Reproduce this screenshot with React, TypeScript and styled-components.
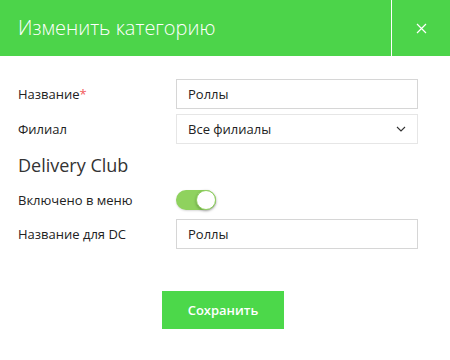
import React from "react";
import styled, { createGlobalStyle } from "styled-components";

const Global = createGlobalStyle`
  html, body { margin: 0; padding: 0; background: #fff; }
  body { font-family: "Open Sans", "Noto Sans", sans-serif; color: #333; }
  * { box-sizing: border-box; }
`;

const Modal = styled.div`
  width: 450px;
  height: 360px;
  background: #fff;
`;

const Header = styled.div`
  height: 56px;
  display: flex;
  background: #4cd44a;
  color: #fff;
`;

const Title = styled.div`
  flex: 1;
  display: flex;
  align-items: center;
  padding-left: 18px;
  font-size: 20px;
  font-weight: 300;
  padding-bottom: 2px;
`;

const Close = styled.div`
  width: 59px;
  border-left: 1px solid #fff;
  display: flex;
  align-items: center;
  justify-content: center;
`;

const Body = styled.div`
  padding: 23px 32px 0 18px;
  display: flex;
  flex-direction: column;
`;

const Row = styled.div<{ $mt?: number }>`
  display: flex;
  align-items: center;
  height: 30px;
  margin-top: ${(p) => p.$mt ?? 0}px;
`;

const Label = styled.div`
  width: 158px;
  font-size: 13px;
  color: #222;
`;

const Star = styled.span`
  color: #f25a5a;
`;

const Field = styled.div<{ $light?: boolean }>`
  flex: 1;
  height: 30px;
  border: 1px solid ${(p) => (p.$light ? "#e6e6e6" : "#d6d6d6")};
  display: flex;
  align-items: center;
  justify-content: space-between;
  padding: 0 11px 0 11px;
  font-size: 13px;
  color: #222;
`;

const Section = styled.div`
  font-size: 18px;
  color: #333;
  margin-top: 7px;
  height: 28px;
  line-height: 28px;
`;

const Toggle = styled.div`
  width: 40px;
  height: 20px;
  border-radius: 10px;
  background: #8fd25e;
  position: relative;
  box-shadow: 0 1px 2px rgba(0, 0, 0, 0.15);
`;

const Knob = styled.div`
  position: absolute;
  right: 0;
  top: 0;
  width: 20px;
  height: 20px;
  border-radius: 50%;
  background: #fff;
  border: 1px solid #8fd25e;
  box-shadow: 0 1px 3px rgba(0, 0, 0, 0.3);
`;

const Footer = styled.div`
  display: flex;
  justify-content: center;
  margin-top: 42px;
`;

const Button = styled.button`
  width: 122px;
  height: 38px;
  border: none;
  background: #4cd84a;
  color: #fff;
  font-family: "Open Sans", sans-serif;
  font-size: 13px;
  font-weight: 600;
  margin-left: 10px;
`;

export default function App() {
  return (
    <>
      <Global />
      <Modal>
        <Header>
          <Title>Изменить категорию</Title>
          <Close>
            <svg width="11" height="11" viewBox="0 0 11 11">
              <path d="M1 1 L10 10 M10 1 L1 10" stroke="#fff" strokeWidth="1.2" />
            </svg>
          </Close>
        </Header>
        <Body>
          <Row>
            <Label>
              Название<Star>*</Star>
            </Label>
            <Field>Роллы</Field>
          </Row>
          <Row $mt={5}>
            <Label>Филиал</Label>
            <Field $light>
              <span>Все филиалы</span>
              <svg width="10" height="6" viewBox="0 0 10 6">
                <path d="M1 1 L5 5 L9 1" stroke="#333" strokeWidth="1.1" fill="none" />
              </svg>
            </Field>
          </Row>
          <Section>Delivery Club</Section>
          <Row $mt={6}>
            <Label>Включено в меню</Label>
            <Toggle>
              <Knob />
            </Toggle>
          </Row>
          <Row $mt={4}>
            <Label>Название для DC</Label>
            <Field>Роллы</Field>
          </Row>
          <Footer>
            <Button>Сохранить</Button>
          </Footer>
        </Body>
      </Modal>
    </>
  );
}
